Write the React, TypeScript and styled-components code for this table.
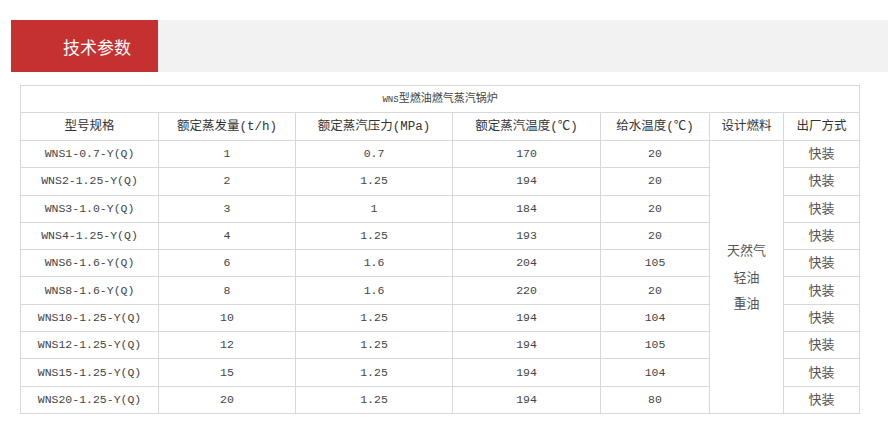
import React from "react";
import styled, { createGlobalStyle } from "styled-components";

const Global = createGlobalStyle`
  html, body { margin: 0; padding: 0; background: #fff; }
  body { font-family: "Liberation Mono", "Noto Sans CJK SC", monospace; }
`;

const Page = styled.div`
  padding: 20px 0 0 11px;
  width: 888px;
  box-sizing: border-box;
`;

const TitleBar = styled.div`
  display: flex;
  height: 52px;
  background: #f2f2f2;
`;

const TitleTab = styled.div`
  width: 147px;
  background: #c53131;
  color: #fff;
  font-family: "Noto Sans CJK SC", sans-serif;
  font-size: 17px;
  display: flex;
  align-items: center;
  padding-left: 52px;
  box-sizing: border-box;
`;

const Table = styled.table`
  margin: 13px 0 0 9px;
  border-collapse: collapse;
  table-layout: fixed;
  width: 840px;
  color: #444;
`;

const Cell = styled.td<{ $head?: boolean }>`
  border: 1px solid #d8d8d8;
  text-align: center;
  vertical-align: middle;
  padding: 0;
  line-height: 16px;
  font-family: "Liberation Mono", "Noto Sans CJK SC", monospace;
  font-size: ${(p) => (p.$head ? "12.5px" : "11.5px")};
  color: ${(p) => (p.$head ? "#333" : "#444")};
`;

const CapRow = styled.tr`
  height: 27px;
`;
const HeadRow = styled.tr`
  height: 28px;
`;
const DataRow = styled.tr`
  height: 27.3px;
`;

const Caption = styled.td`
  border: 1px solid #d8d8d8;
  text-align: center;
  line-height: 16px;
  font-size: 11px;
  color: #444;
  font-family: "Liberation Mono", "Noto Sans CJK SC", monospace;
`;

const Small = styled.span`
  font-size: 9px;
`;

const Fuel = styled(Cell)`
  font-family: "Noto Sans CJK SC", sans-serif;
  font-size: 13px;
  line-height: 26.5px;
  color: #555;
`;

const Cjk = styled(Cell)`
  font-family: "Noto Sans CJK SC", sans-serif;
  font-size: 13px;
  padding-bottom: 2px;
  color: #555;
`;

const rows = [
  ["WNS1-0.7-Y(Q)", "1", "0.7", "170", "20"],
  ["WNS2-1.25-Y(Q)", "2", "1.25", "194", "20"],
  ["WNS3-1.0-Y(Q)", "3", "1", "184", "20"],
  ["WNS4-1.25-Y(Q)", "4", "1.25", "193", "20"],
  ["WNS6-1.6-Y(Q)", "6", "1.6", "204", "105"],
  ["WNS8-1.6-Y(Q)", "8", "1.6", "220", "20"],
  ["WNS10-1.25-Y(Q)", "10", "1.25", "194", "104"],
  ["WNS12-1.25-Y(Q)", "12", "1.25", "194", "105"],
  ["WNS15-1.25-Y(Q)", "15", "1.25", "194", "104"],
  ["WNS20-1.25-Y(Q)", "20", "1.25", "194", "80"],
];

const widths = [138, 137, 157, 148, 109, 74, 76];

export default function App() {
  return (
    <>
      <Global />
      <Page>
        <TitleBar>
          <TitleTab>技术参数</TitleTab>
        </TitleBar>
        <Table>
          <colgroup>
            {widths.map((w, i) => (
              <col key={i} style={{ width: w }} />
            ))}
          </colgroup>
          <tbody>
            <CapRow>
              <Caption colSpan={7}>
                <Small>WNS</Small>型燃油燃气蒸汽锅炉
              </Caption>
            </CapRow>
            <HeadRow>
              <Cell $head>型号规格</Cell>
              <Cell $head>额定蒸发量(t/h)</Cell>
              <Cell $head>额定蒸汽压力(MPa)</Cell>
              <Cell $head>额定蒸汽温度(℃)</Cell>
              <Cell $head>给水温度(℃)</Cell>
              <Cell $head>设计燃料</Cell>
              <Cell $head>出厂方式</Cell>
            </HeadRow>
            {rows.map((r, i) => (
              <DataRow key={i}>
                {r.map((v, j) => (
                  <Cell key={j}>{v}</Cell>
                ))}
                {i === 0 && (
                  <Fuel rowSpan={10}>
                    天然气
                    <br />
                    轻油
                    <br />
                    重油
                  </Fuel>
                )}
                <Cjk>快装</Cjk>
              </DataRow>
            ))}
          </tbody>
        </Table>
      </Page>
    </>
  );
}
